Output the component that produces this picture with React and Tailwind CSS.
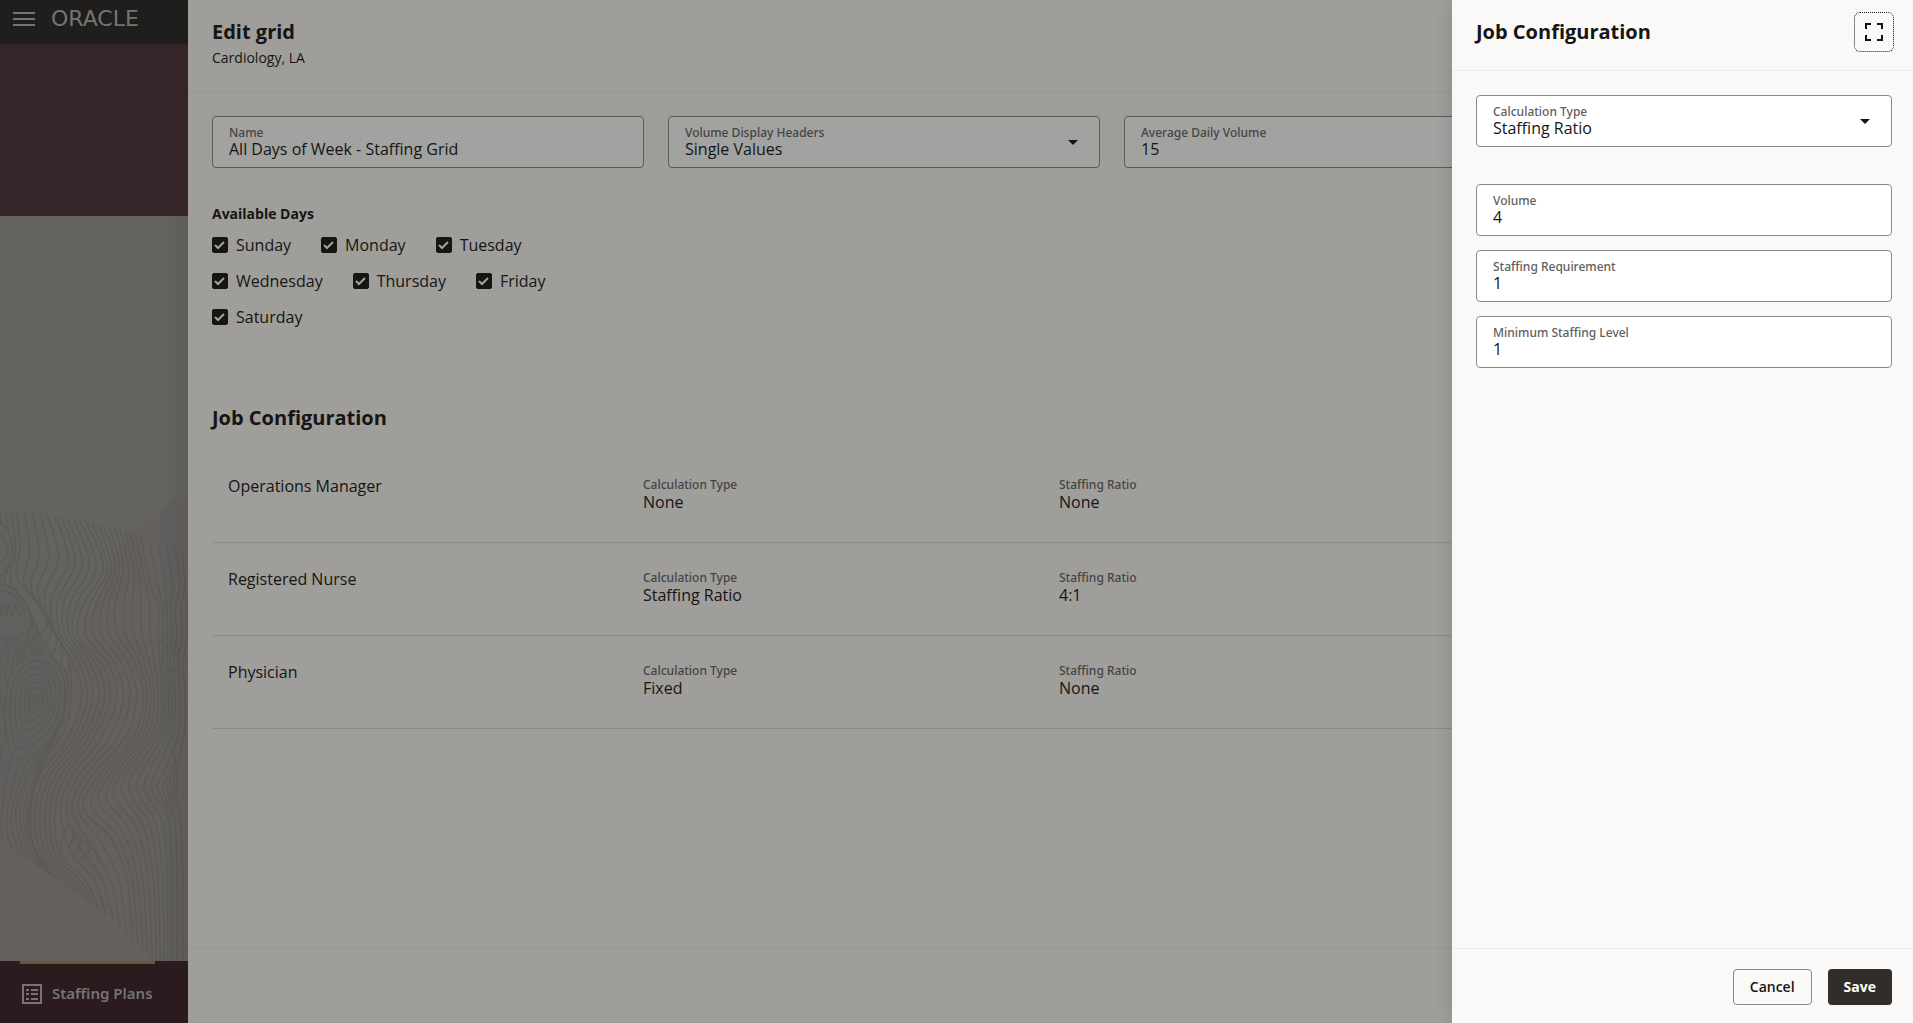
import { useState } from "react";

const days = ["Sunday", "Monday", "Tuesday", "Wednesday", "Thursday", "Friday", "Saturday"];

const jobs = [
  { name: "Operations Manager", type: "None", ratio: "None" },
  { name: "Registered Nurse", type: "Staffing Ratio", ratio: "4:1" },
  { name: "Physician", type: "Fixed", ratio: "None" },
];

// guide curves of the wallpaper, lines are interpolated between neighbours
const guides = [
  [[-60, 60], [-20, 250], [-60, 340], [-60, 450], [-30, 520], [-20, 620], [-20, 750], [-40, 850], [-40, 950], [-20, 1080], [60, 1180], [90, 1250]],
  [[50, 85], [60, 200], [50, 280], [110, 350], [140, 420], [90, 480], [190, 540], [195, 650], [120, 800], [60, 940], [90, 1080], [200, 1190]],
  [[160, 90], [205, 230], [155, 340], [165, 440], [215, 520], [245, 620], [200, 750], [120, 850], [90, 950], [110, 1080], [200, 1180], [260, 1230]],
  [[250, 105], [310, 250], [250, 360], [235, 450], [310, 540], [330, 640], [270, 760], [200, 850], [165, 950], [180, 1080], [260, 1160], [310, 1280]],
  [[340, 120], [370, 250], [345, 360], [350, 440], [400, 520], [430, 620], [400, 740], [290, 860], [250, 950], [330, 1030], [380, 1150], [400, 1340]],
  [[420, 150], [450, 300], [475, 360], [475, 440], [480, 530], [485, 620], [475, 720], [390, 830], [365, 900], [430, 1000], [460, 1150], [470, 1400]],
  [[520, 170], [540, 300], [525, 370], [530, 440], [520, 530], [525, 620], [520, 720], [480, 820], [455, 890], [505, 980], [515, 1150], [515, 1400]],
  [[590, 170], [580, 300], [580, 370], [580, 440], [565, 530], [570, 620], [570, 720], [560, 820], [560, 890], [560, 980], [565, 1150], [565, 1400]],
];

const counts = [6, 5, 5, 5, 5, 4, 3];

// how much each ring of the whorl shrinks
const whorl = [1, 0.84, 0.68, 0.53, 0.38, 0.24, 0.1];

function smooth(points) {
  let d = `M${points[0][0]} ${points[0][1]}`;
  for (let i = 0; i < points.length - 1; i++) {
    const a = points[i - 1] || points[i];
    const b = points[i];
    const c = points[i + 1];
    const e = points[i + 2] || c;
    d += `C${b[0] + (c[0] - a[0]) / 6} ${b[1] + (c[1] - a[1]) / 6} ${c[0] - (e[0] - b[0]) / 6} ${c[1] - (e[1] - b[1]) / 6} ${c[0]} ${c[1]}`;
  }
  return d;
}

const contours = [];
for (let g = 0; g < counts.length; g++) {
  for (let n = 0; n < counts[g]; n++) {
    const t = n / counts[g];
    contours.push(
      smooth(guides[g].map((p, i) => [p[0] + (guides[g + 1][i][0] - p[0]) * t, p[1] + (guides[g + 1][i][1] - p[1]) * t]))
    );
  }
}

function Wallpaper() {
  return (
    <svg className="h-full w-full" viewBox="0 -762 564 2150" preserveAspectRatio="none" aria-hidden="true">
      <defs>
        <clipPath id="hill">
          <path d="M0 92C200 92 400 150 564 210V1388H465C380 1310 300 1240 240 1200C160 1140 60 1090 0 1030Z" />
        </clipPath>
        <linearGradient id="edge" x1="0" x2="1" y1="0" y2="0">
          <stop offset="0.85" stopColor="#000" stopOpacity="0" />
          <stop offset="1" stopColor="#000" stopOpacity="0.06" />
        </linearGradient>
      </defs>
      <rect y="-762" width="564" height="2150" fill="#646360" />
      <path d="M380 160L564 40V1388H0V920L130 820Q210 700 190 560L380 160Z" fill="#64605e" />
      <path d="M480 90L530 50V1388H490Z" fill="#62605f" />
      <path d="M0 300Q70 330 130 460Q215 560 190 700Q140 850 0 920Z" fill="#605f5d" />
      <g clipPath="url(#hill)" fill="none" stroke="#5b5a57" strokeWidth="4">
        {contours.map((d) => (
          <path key={d} d={d} />
        ))}
        <g fill="#605f5d">
          {whorl.map((s) => (
            <path
              key={s}
              transform={`translate(110 630) scale(${s})`}
              strokeWidth={4 / s}
              d="M-75 170C-110 60 -110 -125 5 -130C90 -130 100 0 70 70C30 150 -50 190 -75 170Z"
            />
          ))}
        </g>
        <g fill="#61605e">
          <path d="M-20 300Q60 290 95 400Q110 440 20 460L-20 450Z" />
          <path d="M-20 320Q50 310 75 385L60 390L45 360L40 395L25 360L20 395L5 360L0 395Z" />
        </g>
        <g fill="#636260">
          <path d="M-20 130Q30 110 38 200Q40 260 -20 290M-20 160Q15 160 22 200Q20 230 -5 240" />
        </g>
        <g fill="#64605e">
          <path d="M522 780L470 885L510 965L532 880Z" />
          <path d="M518 830L485 888L508 940L524 885Z" />
          <path d="M510 860L498 888L507 915L515 888Z" />
        </g>
        <path d="M180 1060Q200 980 215 1000T205 1070Q230 990 240 1030T225 1080Q250 1020 262 1050T245 1090Q275 1040 290 1080T270 1110" />
        <path d="M485 500Q490 470 515 490T540 530T505 550T490 520M480 470Q500 440 525 470T520 510" />
      </g>
      <rect y="-762" width="564" height="2150" fill="url(#edge)" />
    </svg>
  );
}

function Caret() {
  return (
    <svg className="pointer-events-none mr-[5px] h-[5px] w-[10px] shrink-0" viewBox="0 0 10 5" aria-hidden="true">
      <path d="M0 0H10L5 5Z" fill="#161513" />
    </svg>
  );
}

function Field({ id, label, value, options, dim }) {
  const [current, setCurrent] = useState(value);
  const control = "-mt-0.5 block h-5 w-full appearance-none bg-transparent p-0 text-base leading-5 text-[#161513] outline-none";
  return (
    <div
      className={
        dim
          ? "flex h-[52px] items-center rounded border border-[#5c5b5a] bg-[#a2a2a1] px-4"
          : "flex h-[52px] items-center rounded border border-[#8b8987] bg-white px-4"
      }
    >
      <div className="min-w-0 flex-1">
        <label
          htmlFor={id}
          className={
            dim
              ? "block font-['Noto_Sans',sans-serif] text-xs leading-4 font-medium text-[#454443]"
              : "block font-['Noto_Sans',sans-serif] text-xs leading-4 font-medium text-[#5f605e]"
          }
        >
          {label}
        </label>
        {options ? (
          <select id={id} value={current} onChange={(e) => setCurrent(e.target.value)} className={control}>
            {options.map((o) => (
              <option key={o}>{o}</option>
            ))}
          </select>
        ) : (
          <input id={id} type="text" value={current} onChange={(e) => setCurrent(e.target.value)} className={control} />
        )}
      </div>
      {options && <Caret />}
    </div>
  );
}

function Stat({ label, value }) {
  return (
    <div className="w-[416px] shrink-0">
      <div className="font-['Noto_Sans',sans-serif] text-xs leading-[18px] font-medium text-[#454443]">{label}</div>
      <div className="text-base leading-4">{value}</div>
    </div>
  );
}

function Sidebar() {
  return (
    <div className="flex w-[188px] shrink-0 flex-col">
      <header className="flex h-11 items-center gap-4 bg-[#1f1e1c] pb-[6px] pl-[13px]">
        <button aria-label="Navigation menu" className="text-[#757473]">
          <svg className="h-[14px] w-[22px]" viewBox="0 0 22 14" fill="none" stroke="currentColor" strokeWidth="2">
            <path d="M0 1H22M0 7H22M0 13H22" />
          </svg>
        </button>
        <span className="font-['DejaVu_Sans',sans-serif] text-[22px] leading-6 text-[#757473]">ORACLE</span>
      </header>
      <div className="h-[172px] bg-[#352528]" />
      <div className="h-0 flex-1">
        <Wallpaper />
      </div>
      <nav className="h-[62px] bg-[#2b1b1e] pl-5">
        <a href="#" className="flex h-full w-[135px] items-center gap-[10px] border-t-3 border-[#685733] pl-[2px] text-[#757374]">
          <svg className="h-5 w-5 shrink-0" viewBox="0 0 20 20" fill="none" stroke="currentColor" strokeWidth="2">
            <path d="M1 1H19V19H1ZM4 6H7M9 6H16M4 10H7M9 10H16M4 15H7M9 15H16" />
          </svg>
          <span className="font-['Noto_Sans',sans-serif] text-[15px] font-semibold whitespace-nowrap">Staffing Plans</span>
        </a>
      </nav>
    </div>
  );
}

function EditGrid() {
  const [checked, setChecked] = useState(days);
  const toggle = (day) =>
    setChecked(checked.includes(day) ? checked.filter((d) => d !== day) : [...checked, day]);

  return (
    <main className="flex min-w-0 flex-1 flex-col overflow-hidden bg-[#9f9e9b]">
      <header className="h-[92px] border-b border-[#989795] px-6 pt-[18px]">
        <h1 className="text-[20px] leading-7 font-bold">Edit grid</h1>
        <p className="text-sm leading-6">Cardiology, LA</p>
      </header>
      <section className="flex-1 pt-6 pl-6">
        <div className="flex gap-6">
          <div className="w-[432px] shrink-0">
            <Field id="grid-name" label="Name" value="All Days of Week - Staffing Grid" dim />
          </div>
          <div className="w-[432px] shrink-0">
            <Field id="headers" label="Volume Display Headers" value="Single Values" options={["Single Values", "Range"]} dim />
          </div>
          <div className="w-[432px] shrink-0">
            <Field id="average" label="Average Daily Volume" value="15" dim />
          </div>
        </div>
        <fieldset className="mt-9">
          <legend className="text-sm leading-5 font-bold">Available Days</legend>
          <div className="mt-[9px] flex w-[384px] flex-wrap gap-x-[30px] gap-y-3">
            {days.map((day) => (
              <label key={day} className="flex h-6 items-center gap-2 text-base">
                <span className="relative h-4 w-4">
                  <input
                    type="checkbox"
                    checked={checked.includes(day)}
                    onChange={() => toggle(day)}
                    className="peer block h-4 w-4 appearance-none rounded-[2px] border border-[#161513] checked:bg-[#161513]"
                  />
                  <svg className="pointer-events-none absolute inset-0 hidden h-4 w-4 peer-checked:block" viewBox="0 0 16 16" fill="none" stroke="#a2a2a1" strokeWidth="2">
                    <path d="M3 8L6 11L12 5" />
                  </svg>
                </span>
                {day}
              </label>
            ))}
          </div>
        </fieldset>
        <h2 className="mt-[75px] text-[20px] leading-7 font-bold">Job Configuration</h2>
        <ul className="mt-[18px]">
          {jobs.map((job) => (
            <li key={job.name} className="flex h-[93px] border-b border-[#8c8b89] pt-[26px] pl-4">
              <span className="w-[415px] shrink-0 text-base leading-5">{job.name}</span>
              <Stat label="Calculation Type" value={job.type} />
              <Stat label="Staffing Ratio" value={job.ratio} />
            </li>
          ))}
        </ul>
      </section>
      <footer className="h-[75px] border-t border-[#989795]" />
    </main>
  );
}

function JobDrawer() {
  return (
    <aside className="relative z-10 flex w-[461px] shrink-0 flex-col bg-[#fbf9f8] shadow-[0_0_16px_rgba(0,0,0,0.15)]">
      <header className="flex h-[71px] items-start justify-between border-b border-[#efedec] pt-3 pr-[19px] pl-6">
        <h2 className="text-[20px] leading-10 font-bold">Job Configuration</h2>
        <button aria-label="Expand" className="flex h-10 w-10 items-center justify-center rounded-md border border-dotted border-[#161513]">
          <svg className="h-[18px] w-[18px]" viewBox="0 0 18 18" fill="none" stroke="#161513" strokeWidth="2">
            <path d="M1 6V1H6M12 1H17V6M17 12V17H12M6 17H1V12" />
          </svg>
        </button>
      </header>
      <form className="flex flex-1 flex-col pt-6 pr-[21px] pl-6">
        <Field id="calc-type" label="Calculation Type" value="Staffing Ratio" options={["Staffing Ratio", "Fixed", "None"]} />
        <div className="mt-[37px] flex flex-col gap-[14px]">
          <Field id="volume" label="Volume" value="4" />
          <Field id="requirement" label="Staffing Requirement" value="1" />
          <Field id="minimum" label="Minimum Staffing Level" value="1" />
        </div>
      </form>
      <footer className="flex h-[75px] items-start justify-end gap-4 border-t border-[#efedec] pt-5 pr-[21px]">
        <button className="h-9 rounded border border-[#8b8987] px-4 text-sm font-semibold">Cancel</button>
        <button className="h-9 rounded bg-[#312d2a] px-4 text-sm font-bold text-white">Save</button>
      </footer>
    </aside>
  );
}

export default function App() {
  return (
    <div className="flex min-h-screen font-['Open_Sans',sans-serif] text-[#161513]">
      <Sidebar />
      <EditGrid />
      <JobDrawer />
    </div>
  );
}
